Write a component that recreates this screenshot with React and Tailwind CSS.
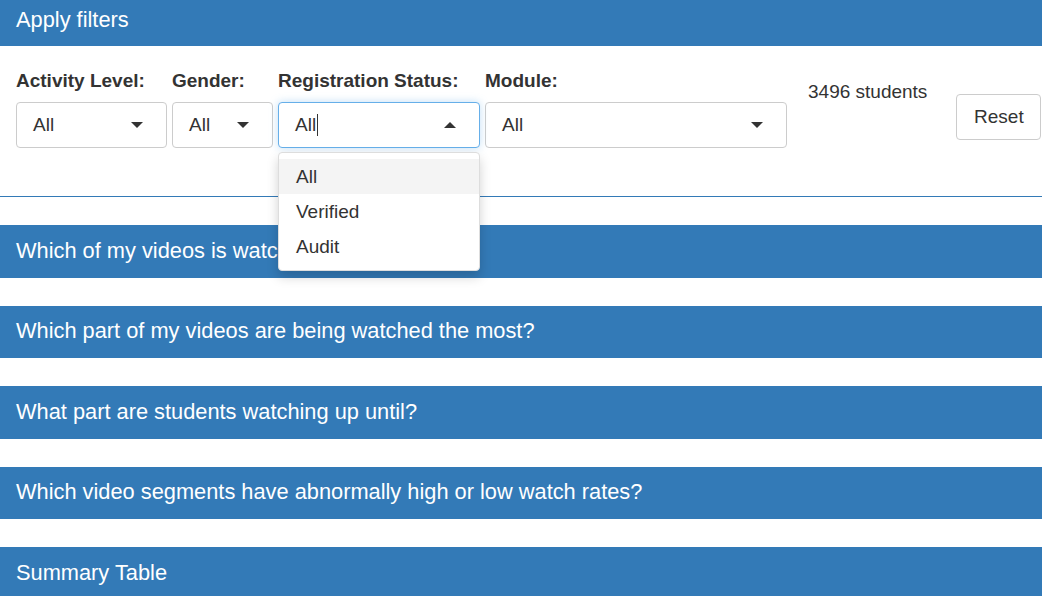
import React from "react";

const font = { fontFamily: '"Liberation Sans", Arial, sans-serif' };

function Caret({ up }) {
  return (
    <svg width="12" height="6" viewBox="0 0 12 6" className="shrink-0">
      {up ? <path d="M0 6 L6 0 L12 6 Z" fill="#333" /> : <path d="M0 0 L12 0 L6 6 Z" fill="#333" />}
    </svg>
  );
}

function Select({ label, width, open }) {
  return (
    <div className="flex flex-col" style={{ width }}>
      <div className="font-bold text-[19px] leading-[22px] text-[#333] mb-[10px] whitespace-nowrap">{label}</div>
      <div
        className={`h-[46px] rounded-[4px] border bg-white flex items-center justify-between pl-[16px] pr-[23px] text-[19px] text-[#333] ${
          open ? "border-[#66afe9] shadow-[0_0_8px_rgba(102,175,233,0.4)]" : "border-[#ccc]"
        }`}
      >
        <span className="flex items-center">
          All
          {open && <span className="inline-block w-px h-[22px] bg-[#333] ml-[1px]" />}
        </span>
        <Caret up={open} />
      </div>
    </div>
  );
}

function Bar({ children }) {
  return (
    <div className="bg-[#337ab7] h-[52.5px] flex items-center px-[16px] text-white text-[21.8px]">{children}</div>
  );
}

export default function App() {
  return (
    <div className="w-[1042px] h-[596px] overflow-hidden bg-white relative" style={font}>
      <div className="bg-[#337ab7] h-[46px] flex items-center px-[16px] text-white text-[21.8px] pb-[6px]">Apply filters</div>
      <div className="h-[151px] border-b border-[#337ab7] flex items-start pt-[24px] pl-[16px]">
        <div className="flex gap-[5px] relative">
          <Select label="Activity Level:" width={151} />
          <Select label="Gender:" width={101} />
          <div className="relative">
            <Select label="Registration Status:" width={202} open />
            <div className="absolute left-0 top-[82px] w-[202px] bg-white rounded-[4px] border border-[#ddd] shadow-[0_6px_12px_rgba(0,0,0,0.175)] py-[6px] z-10 text-[19px] text-[#333]">
              <div className="h-[35px] flex items-center pl-[17px] pt-[1px] bg-[#f4f4f4]">All</div>
              <div className="h-[35px] flex items-center pl-[17px] pt-[1px]">Verified</div>
              <div className="h-[35px] flex items-center pl-[17px] pt-[1px]">Audit</div>
            </div>
          </div>
          <Select label="Module:" width={302} />
        </div>
        <div className="ml-[21px] mt-[8px] text-[19px] text-[#333] whitespace-nowrap">3496 students</div>
        <div className="ml-[29px] mt-[24px] h-[46px] w-[85px] shrink-0 border border-[#ccc] rounded-[4px] flex items-center justify-center text-[19px] text-[#333]">
          Reset
        </div>
      </div>
      <div className="flex flex-col gap-[28px] pt-[28px]">
        <Bar>Which of my videos is watched the most?</Bar>
        <Bar>Which part of my videos are being watched the most?</Bar>
        <Bar>What part are students watching up until?</Bar>
        <Bar>Which video segments have abnormally high or low watch rates?</Bar>
        <Bar>Summary Table</Bar>
      </div>
    </div>
  );
}
